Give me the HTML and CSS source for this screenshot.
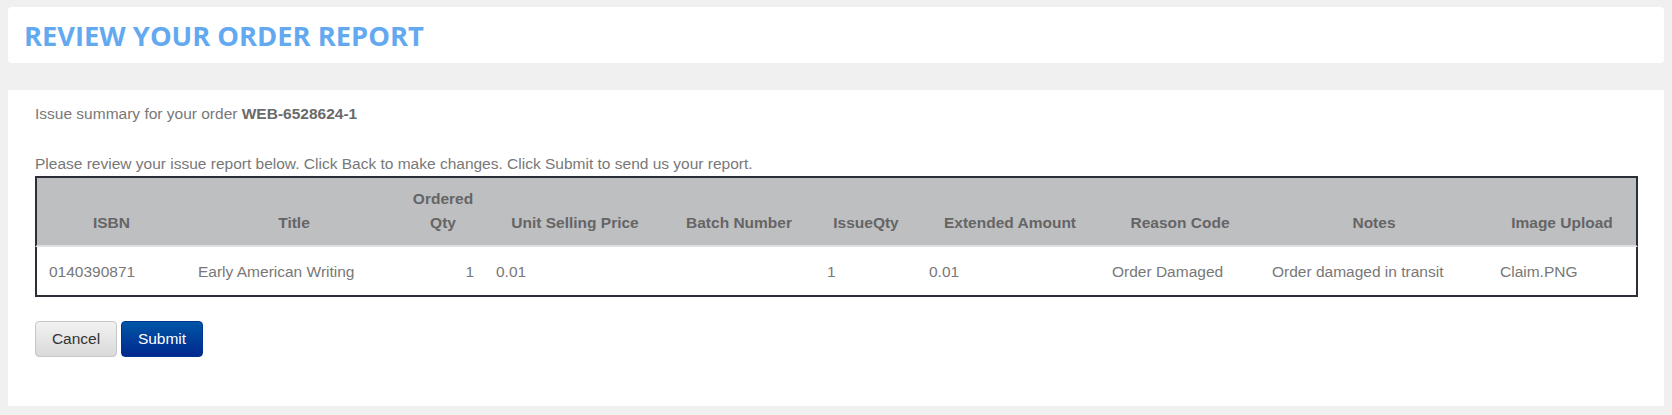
FILE: index.html
```html
<!DOCTYPE html>
<html lang="en">
<head>
    <meta charset="UTF-8">
    <meta name="viewport" content="width=device-width, initial-scale=1.0">
    <title>Review Your Order Report</title>
    <link rel="stylesheet" href="styles.css">
</head>
<body>
    <header class="page-header">
        <h1>Review Your Order Report</h1>
    </header>

    <div class="panel">
        <p class="summary">Issue summary for your order <strong>WEB-6528624-1</strong></p>
        <p class="instructions">Please review your issue report below. Click Back to make changes. Click Submit to send us your report.</p>

        <table class="report">
            <colgroup>
                <col style="width: 151px">
                <col style="width: 216px">
                <col style="width: 82px">
                <col style="width: 182px">
                <col style="width: 146px">
                <col style="width: 108px">
                <col style="width: 180px">
                <col style="width: 160px">
                <col style="width: 228px">
                <col>
            </colgroup>
            <thead>
                <tr>
                    <th>ISBN</th>
                    <th>Title</th>
                    <th>Ordered<br>Qty</th>
                    <th>Unit Selling Price</th>
                    <th>Batch Number</th>
                    <th>IssueQty</th>
                    <th>Extended Amount</th>
                    <th>Reason Code</th>
                    <th>Notes</th>
                    <th>Image Upload</th>
                </tr>
            </thead>
            <tbody>
                <tr>
                    <td>0140390871</td>
                    <td>Early American Writing</td>
                    <td class="num">1</td>
                    <td>0.01</td>
                    <td></td>
                    <td class="qty">1</td>
                    <td class="amount">0.01</td>
                    <td>Order Damaged</td>
                    <td>Order damaged in transit</td>
                    <td>Claim.PNG</td>
                </tr>
            </tbody>
        </table>

        <div class="actions">
            <button class="btn btn-cancel">Cancel</button>
            <button class="btn btn-submit">Submit</button>
        </div>
    </div>
</body>
</html>
```

FILE: styles.css
```css
* {
    margin: 0;
    padding: 0;
    box-sizing: border-box;
}
body {
    background-color: #f0f0f0;
    padding: 7px 8px 9px;
    font-family: "Liberation Sans", Arial, sans-serif;
    font-size: 15.5px;
    color: #787878;
}
.page-header {
    background-color: white;
    border-radius: 4px;
    height: 56px;
    padding-left: 16px;
}
.page-header h1 {
    font-family: "Open Sans", sans-serif;
    font-weight: 700;
    font-size: 27.3px;
    line-height: 57px;
    text-transform: uppercase;
    color: #63a9f0;
}
.panel {
    background-color: white;
    margin-top: 27px;
    padding: 14px 26px 49px 27px;
}
.summary,
.instructions {
    line-height: 20px;
}
.summary strong {
    color: #6a6a6a;
}
.instructions {
    margin-top: 30px;
    margin-bottom: 2px;
}
.report {
    width: 100%;
    table-layout: fixed;
    border-collapse: separate;
    border-spacing: 0;
}
.report th {
    background-color: #bebfc1;
    color: #656565;
    font-weight: bold;
    line-height: 24px;
    padding: 9px 4px 10px;
    text-align: center;
    vertical-align: bottom;
    border-top: 2px solid #2b2f38;
    border-bottom: 2px solid #e0e0e0;
}
.report th:first-child,
.report td:first-child {
    border-left: 2px solid #2b2f38;
}
.report th:last-child,
.report td:last-child {
    border-right: 2px solid #2b2f38;
}
.report td {
    height: 50px;
    padding: 1px 11px 0 12px;
    vertical-align: middle;
    white-space: nowrap;
    border-bottom: 2px solid #2b2f38;
}
.report td.num {
    text-align: right;
    padding-right: 10px;
}
.report td.qty {
    padding-left: 15px;
}
.report td.amount {
    padding-left: 9px;
}
.actions {
    display: flex;
    gap: 4px;
    margin-top: 24px;
}
.btn {
    width: 82px;
    height: 36px;
    border-radius: 4px;
    font-family: "Liberation Sans", Arial, sans-serif;
    font-size: 15.5px;
    cursor: pointer;
}
.btn-cancel {
    color: #333;
    background: linear-gradient(#f2f2f2, #d9d9d9);
    border: 1px solid #c6c6c6;
}
.btn-submit {
    color: white;
    background: linear-gradient(#0056a6, #00288e);
    border: 1px solid #00358f;
}
```
